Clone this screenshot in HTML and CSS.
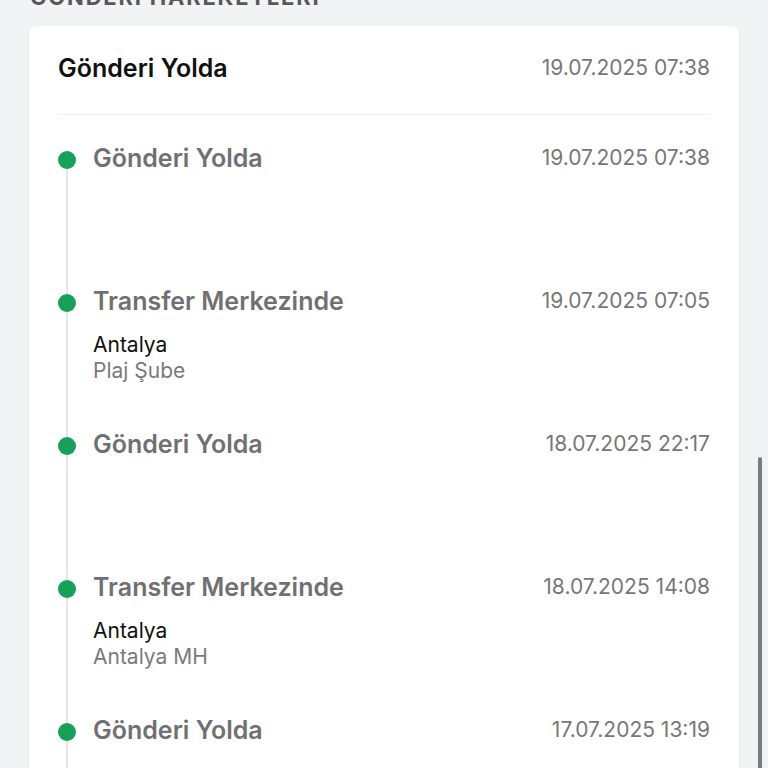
FILE: index.html
```html
<!DOCTYPE html>
<html>
<head>
    <title>Gönderi Hareketleri</title>
    <meta http-equiv="Content-Type" content="text/html; charset=utf-8" />
    <link rel="stylesheet" href="styles.css">
</head>

<body>
    <div class="page">
        <h2 class="section-title">GÖNDERİ HAREKETLERİ</h2>

        <div class="card">
            <div class="card-header">
                <span class="status">Gönderi Yolda</span>
                <span class="date">19.07.2025 07:38</span>
            </div>

            <ul class="timeline">
                <li class="event">
                    <span class="dot"></span>
                    <div class="event-body">
                        <div class="event-row">
                            <span class="event-title">Gönderi Yolda</span>
                            <span class="date">19.07.2025 07:38</span>
                        </div>
                    </div>
                </li>
                <li class="event">
                    <span class="dot"></span>
                    <div class="event-body">
                        <div class="event-row">
                            <span class="event-title">Transfer Merkezinde</span>
                            <span class="date">19.07.2025 07:05</span>
                        </div>
                        <div class="city">Antalya</div>
                        <div class="branch">Plaj Şube</div>
                    </div>
                </li>
                <li class="event">
                    <span class="dot"></span>
                    <div class="event-body">
                        <div class="event-row">
                            <span class="event-title">Gönderi Yolda</span>
                            <span class="date">18.07.2025 22:17</span>
                        </div>
                    </div>
                </li>
                <li class="event">
                    <span class="dot"></span>
                    <div class="event-body">
                        <div class="event-row">
                            <span class="event-title">Transfer Merkezinde</span>
                            <span class="date">18.07.2025 14:08</span>
                        </div>
                        <div class="city">Antalya</div>
                        <div class="branch">Antalya MH</div>
                    </div>
                </li>
                <li class="event">
                    <span class="dot"></span>
                    <div class="event-body">
                        <div class="event-row">
                            <span class="event-title">Gönderi Yolda</span>
                            <span class="date">17.07.2025 13:19</span>
                        </div>
                    </div>
                </li>
            </ul>
        </div>
    </div>

    <div class="scrollbar"></div>
</body>
</html>
```

FILE: styles.css
```css
html, body {
    height: 100%;
    overflow: hidden;
}
body {
    margin: 0;
    font-family: Inter, "Noto Sans", Arial, sans-serif;
    background-color: #f2f3f5;
}
.page {
    padding: 0 29px;
    margin-top: -17px;
}
.section-title {
    margin: 0 0 15px 1px;
    font-size: 22px;
    line-height: 28px;
    font-weight: 700;
    letter-spacing: 1.8px;
    color: #58585b;
}
.card {
    background-color: white;
    border-radius: 8px;
    box-shadow: 0 1px 4px rgba(0, 0, 0, 0.04);
    padding: 0 29px;
}
.card-header {
    display: flex;
    justify-content: space-between;
    align-items: center;
    padding: 26px 0 30px;
    border-bottom: 1px solid #f0f0f2;
}
.status {
    font-size: 25px;
    line-height: 32px;
    font-weight: 600;
    color: #111;
}
.date {
    font-size: 21px;
    line-height: 30px;
    color: #77777a;
}
.timeline {
    list-style: none;
    margin: 0;
    padding: 28px 0 0;
}
.event {
    position: relative;
    display: flex;
    gap: 17px;
    height: 143px;
}
.event:before {
    content: "";
    position: absolute;
    left: 8px;
    top: 18px;
    bottom: -18px;
    width: 2px;
    background-color: #e6e6e8;
}
.dot {
    position: relative;
    flex: none;
    width: 18px;
    height: 18px;
    margin-top: 8px;
    border-radius: 50%;
    background-color: #17a05a;
}
.event-body {
    flex: 1;
}
.event-row {
    display: flex;
    justify-content: space-between;
    align-items: center;
}
.event-title {
    font-size: 25px;
    line-height: 30px;
    font-weight: 600;
    color: #707073;
}
.city {
    margin-top: 16px;
    font-size: 21px;
    line-height: 26px;
    color: #111;
}
.branch {
    font-size: 21px;
    line-height: 26px;
    color: #7a7a7d;
}
.scrollbar {
    position: fixed;
    right: 6px;
    top: 457px;
    width: 4px;
    height: 330px;
    border-radius: 2px;
    background-color: #7b7b7e;
}
```
